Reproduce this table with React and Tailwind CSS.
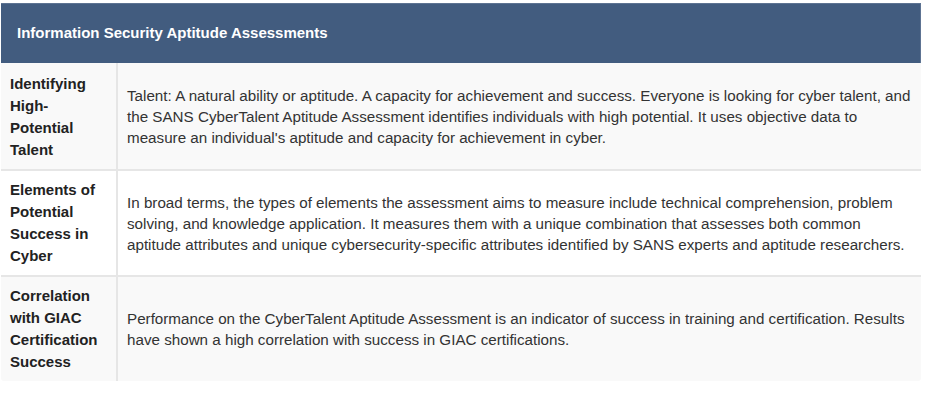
import React from 'react';

const ROWS = [
  {
    label: 'Identifying High-Potential Talent',
    text: "Talent: A natural ability or aptitude. A capacity for achievement and success. Everyone is looking for cyber talent, and the SANS CyberTalent Aptitude Assessment identifies individuals with high potential. It uses objective data to measure an individual's aptitude and capacity for achievement in cyber.",
  },
  {
    label: 'Elements of Potential Success in Cyber',
    text: 'In broad terms, the types of elements the assessment aims to measure include technical comprehension, problem solving, and knowledge application. It measures them with a unique combination that assesses both common aptitude attributes and unique cybersecurity-specific attributes identified by SANS experts and aptitude researchers.',
  },
  {
    label: 'Correlation with GIAC Certification Success',
    text: 'Performance on the CyberTalent Aptitude Assessment is an indicator of success in training and certification. Results have shown a high correlation with success in GIAC certifications.',
  },
];

const App = () => {
  return (
    <div className="w-[936px] h-[402px] bg-white pt-[3px] pl-[1px] font-['Liberation_Sans',Arial,sans-serif]">
      <div className="w-[920px] rounded-b-[3px] overflow-hidden">
        {/* header bar */}
        <div className="h-[60px] bg-[#425c7f] border-t border-r border-[#5d7392] flex items-center pl-[16px]">
          <span className="text-white font-bold text-[15px]">
            Information Security Aptitude Assessments
          </span>
        </div>

        {ROWS.map((row, i) => (
          <div
            key={row.label}
            className={`flex ${i % 2 === 0 ? 'bg-[#f9f9f9]' : 'bg-white'} ${i < ROWS.length - 1 ? 'border-b-2 border-[#e6e6e6]' : ''}`}
          >
            <div
              className={`w-[117px] shrink-0 border-r-2 border-[#e6e6e6] pl-[9px] pr-[6px] pb-[8px] ${i === 0 ? 'pt-[10px]' : 'pt-[8px]'} text-[15px] leading-[22px] font-bold text-[#222]`}
            >
              {row.label}
            </div>
            <div className="flex-1 flex items-center pl-[9px] pr-[8px] text-[15.2px] leading-[21px] text-[#333]">
              <p>{row.text}</p>
            </div>
          </div>
        ))}
      </div>
    </div>
  );
};

export default App;
